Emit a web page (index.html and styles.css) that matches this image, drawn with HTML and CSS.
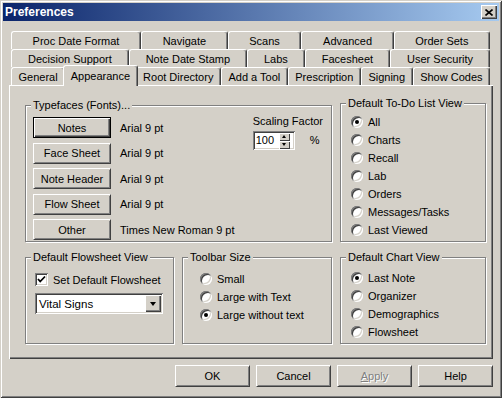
FILE: index.html
```html
<!DOCTYPE html>
<html lang="en">
<head>
    <meta charset="UTF-8">
    <title>Preferences</title>
    <link rel="stylesheet" href="styles.css">
</head>
<body>

    <div class="window">
        <div class="titlebar">
            <span class="title">Preferences</span>
            <span class="close-btn">
                <svg width="8" height="7" viewBox="0 0 8 7"><path d="M0.5 0.5 L7.5 6.5 M7.5 0.5 L0.5 6.5" stroke="#000" stroke-width="1.6" fill="none"/></svg>
            </span>
        </div>

        <div class="dialog">
            <div class="tabs">
                <div class="tab-row">
                    <div class="tab">Proc Date Format</div>
                    <div class="tab">Navigate</div>
                    <div class="tab">Scans</div>
                    <div class="tab">Advanced</div>
                    <div class="tab">Order Sets</div>
                </div>
                <div class="tab-row">
                    <div class="tab">Decision Support</div>
                    <div class="tab">Note Date Stamp</div>
                    <div class="tab">Labs</div>
                    <div class="tab">Facesheet</div>
                    <div class="tab">User Security</div>
                </div>
                <div class="tab-row">
                    <div class="tab">General</div>
                    <div class="tab active">Appearance</div>
                    <div class="tab">Root Directory</div>
                    <div class="tab">Add a Tool</div>
                    <div class="tab">Prescription</div>
                    <div class="tab">Signing</div>
                    <div class="tab">Show Codes</div>
                </div>
            </div>

            <div class="panel">
                <div class="panel-grid">
                    <div class="group typefaces">
                        <span class="group-title">Typefaces (Fonts)...</span>
                        <div class="font-list">
                            <button class="btn default">Notes</button><span>Arial 9 pt</span>
                            <button class="btn">Face Sheet</button><span>Arial 9 pt</span>
                            <button class="btn">Note Header</button><span>Arial 9 pt</span>
                            <button class="btn">Flow Sheet</button><span>Arial 9 pt</span>
                            <button class="btn">Other</button><span>Times New Roman 9 pt</span>
                        </div>
                        <div class="scaling">
                            <div>Scaling Factor</div>
                            <div class="scaling-row">
                                <div class="spin">
                                    <span>100</span>
                                    <span class="spin-btns">
                                        <span class="spin-btn"><span class="arrow-up"></span></span>
                                        <span class="spin-btn"><span class="arrow-down"></span></span>
                                    </span>
                                </div>
                                <span class="pct">%</span>
                            </div>
                        </div>
                    </div>

                    <div class="group todo">
                        <span class="group-title">Default To-Do List View</span>
                        <div class="option"><span class="radio checked"></span>All</div>
                        <div class="option"><span class="radio"></span>Charts</div>
                        <div class="option"><span class="radio"></span>Recall</div>
                        <div class="option"><span class="radio"></span>Lab</div>
                        <div class="option"><span class="radio"></span>Orders</div>
                        <div class="option"><span class="radio"></span>Messages/Tasks</div>
                        <div class="option"><span class="radio"></span>Last Viewed</div>
                    </div>

                    <div class="group flowsheet">
                        <span class="group-title">Default Flowsheet View</span>
                        <div class="check-row">
                            <span class="checkbox">
                                <svg width="9" height="9" viewBox="0 0 9 9"><path d="M1 4 L3.2 6.5 L8 1.5" stroke="#000" stroke-width="1.8" fill="none"/></svg>
                            </span>
                            Set Default Flowsheet
                        </div>
                        <div class="select">
                            <span>Vital Signs</span>
                            <span class="drop-btn"><span class="arrow-down big"></span></span>
                        </div>
                    </div>

                    <div class="group toolbar">
                        <span class="group-title">Toolbar Size</span>
                        <div class="option"><span class="radio"></span>Small</div>
                        <div class="option"><span class="radio"></span>Large with Text</div>
                        <div class="option"><span class="radio checked"></span>Large without text</div>
                    </div>

                    <div class="group chart">
                        <span class="group-title">Default Chart View</span>
                        <div class="option"><span class="radio checked"></span>Last Note</div>
                        <div class="option"><span class="radio"></span>Organizer</div>
                        <div class="option"><span class="radio"></span>Demographics</div>
                        <div class="option"><span class="radio"></span>Flowsheet</div>
                    </div>
                </div>
            </div>

            <div class="actions">
                <button class="btn">OK</button>
                <button class="btn">Cancel</button>
                <button class="btn disabled"><u>A</u>pply</button>
                <button class="btn">Help</button>
            </div>
        </div>
    </div>

</body>
</html>
```

FILE: styles.css
```css
body { margin: 0; background: #d4d0c8; font: 11px "Liberation Sans", Arial, sans-serif; color: #000; }

/* window frame */
.window { width: 502px; height: 398px; box-sizing: border-box; padding: 3px; background: #d4d0c8; box-shadow: inset 1px 1px #d4d0c8, inset -1px -1px #404040, inset 2px 2px #fff, inset -2px -2px #808080; }
.titlebar { height: 18px; display: flex; align-items: center; justify-content: space-between; padding: 0 2px; background: linear-gradient(to right, #0a246a, #a6caf0); }
.title { color: #fff; font-weight: bold; font-size: 12px; }
.close-btn { width: 16px; height: 14px; box-sizing: border-box; display: flex; align-items: center; justify-content: center; background: #d4d0c8; box-shadow: inset 1px 1px #fff, inset -1px -1px #404040, inset -2px -2px #808080; }

.dialog { padding: 10px 6px 0; }

/* tabs */
.tabs { margin: 0 3px 0 2px; }
.tab-row { display: flex; height: 18px; }
.tab { flex: 1 1 auto; box-sizing: border-box; height: 18px; display: flex; align-items: center; justify-content: center; white-space: nowrap; background: #d4d0c8; border-top: 1px solid #fff; border-left: 1px solid #fff; border-right: 1px solid #404040; box-shadow: inset -1px 0 #808080; border-radius: 3px 3px 0 0; }
.tab.active { position: relative; z-index: 1; height: 21px; margin: -2px -2px 0; }

.panel { height: 274px; box-sizing: border-box; padding: 20px 0 0 16px; box-shadow: inset 1px 1px #fff, inset -1px -1px #404040, inset -2px -2px #808080; }
.panel-grid { display: grid; grid-template-columns: 149px 150px 146px; grid-template-rows: 137px 87px; column-gap: 8px; row-gap: 15px; }

/* group boxes */
.group { position: relative; border: 1px solid #808080; box-shadow: inset 1px 1px #fff, 1px 1px #fff; }
.group-title { position: absolute; top: -7px; left: 5px; padding: 0 2px; line-height: 13px; background: #d4d0c8; white-space: nowrap; }

.typefaces { grid-column: 1 / 3; display: flex; padding: 11px 0 0 7px; }
.font-list { display: grid; grid-template-columns: 78px auto; column-gap: 9px; row-gap: 4.5px; align-items: center; align-content: start; }
.scaling { margin: -2px 8px 0 auto; line-height: 13px; }
.scaling-row { display: flex; align-items: center; margin-top: 3px; }
.spin { width: 42px; height: 19px; box-sizing: border-box; display: flex; align-items: center; padding-left: 3px; background: #fff; box-shadow: inset 1px 1px #808080, inset -1px -1px #fff, inset 2px 2px #404040, inset -2px -2px #d4d0c8; }
.spin-btns { display: flex; flex-direction: column; margin-left: auto; margin-right: 5px; }
.spin-btn { width: 11px; height: 8px; box-sizing: border-box; display: flex; align-items: center; justify-content: center; background: #d4d0c8; box-shadow: inset 1px 1px #fff, inset -1px -1px #404040; }
.pct { margin-left: 15px; }

.arrow-up { width: 0; height: 0; border-left: 2.5px solid transparent; border-right: 2.5px solid transparent; border-bottom: 3px solid #000; }
.arrow-down { width: 0; height: 0; border-left: 2.5px solid transparent; border-right: 2.5px solid transparent; border-top: 3px solid #000; }
.arrow-down.big { border-left-width: 3.5px; border-right-width: 3.5px; border-top-width: 4px; }

.todo { grid-column: 3; grid-row: 1; margin-top: -2px; padding: 9px 0 0 10px; }
.flowsheet { padding: 15px 0 0 9px; }
.toolbar { padding: 12px 0 0 17px; }
.chart { padding: 11px 0 0 10px; }

/* radios, checkbox, select */
.option { display: flex; align-items: center; gap: 5px; height: 18px; white-space: nowrap; }
.radio { position: relative; width: 12px; height: 12px; border-radius: 50%; background: #fff; box-shadow: inset 1px 1px #808080, inset -1px -1px #fff, inset 2px 2px #404040, inset -2px -2px #d4d0c8; }
.radio.checked::after { content: ""; position: absolute; left: 4px; top: 4px; width: 4px; height: 4px; border-radius: 50%; background: #000; }

.check-row { display: flex; align-items: center; gap: 5px; height: 13px; }
.checkbox { width: 13px; height: 13px; box-sizing: border-box; display: flex; align-items: center; justify-content: center; background: #fff; box-shadow: inset 1px 1px #808080, inset -1px -1px #fff, inset 2px 2px #404040, inset -2px -2px #d4d0c8; }
.select { margin-top: 7px; width: 128px; height: 21px; box-sizing: border-box; display: flex; align-items: center; justify-content: space-between; padding: 2px 2px 2px 4px; font-size: 11.5px; background: #fff; box-shadow: inset 1px 1px #808080, inset -1px -1px #fff, inset 2px 2px #404040, inset -2px -2px #d4d0c8; }
.drop-btn { width: 16px; height: 17px; box-sizing: border-box; display: flex; align-items: center; justify-content: center; background: #d4d0c8; box-shadow: inset 1px 1px #fff, inset -1px -1px #404040, inset -2px -2px #808080; }

/* push buttons */
.btn { font: inherit; color: #000; padding: 0; background: #d4d0c8; height: 21px; border: 1px solid; border-color: #fff #404040 #404040 #fff; box-shadow: inset 1px 1px #d4d0c8, inset -1px -1px #808080; }
.btn.default { border-color: #000; box-shadow: inset 1px 1px #fff, inset -1px -1px #404040, inset -2px -2px #808080; }
.btn.disabled { color: #808080; text-shadow: 1px 1px #fff; }

.actions { display: flex; justify-content: flex-end; gap: 6px; margin-top: 6px; }
.actions .btn { width: 75px; height: 22px; }
```
